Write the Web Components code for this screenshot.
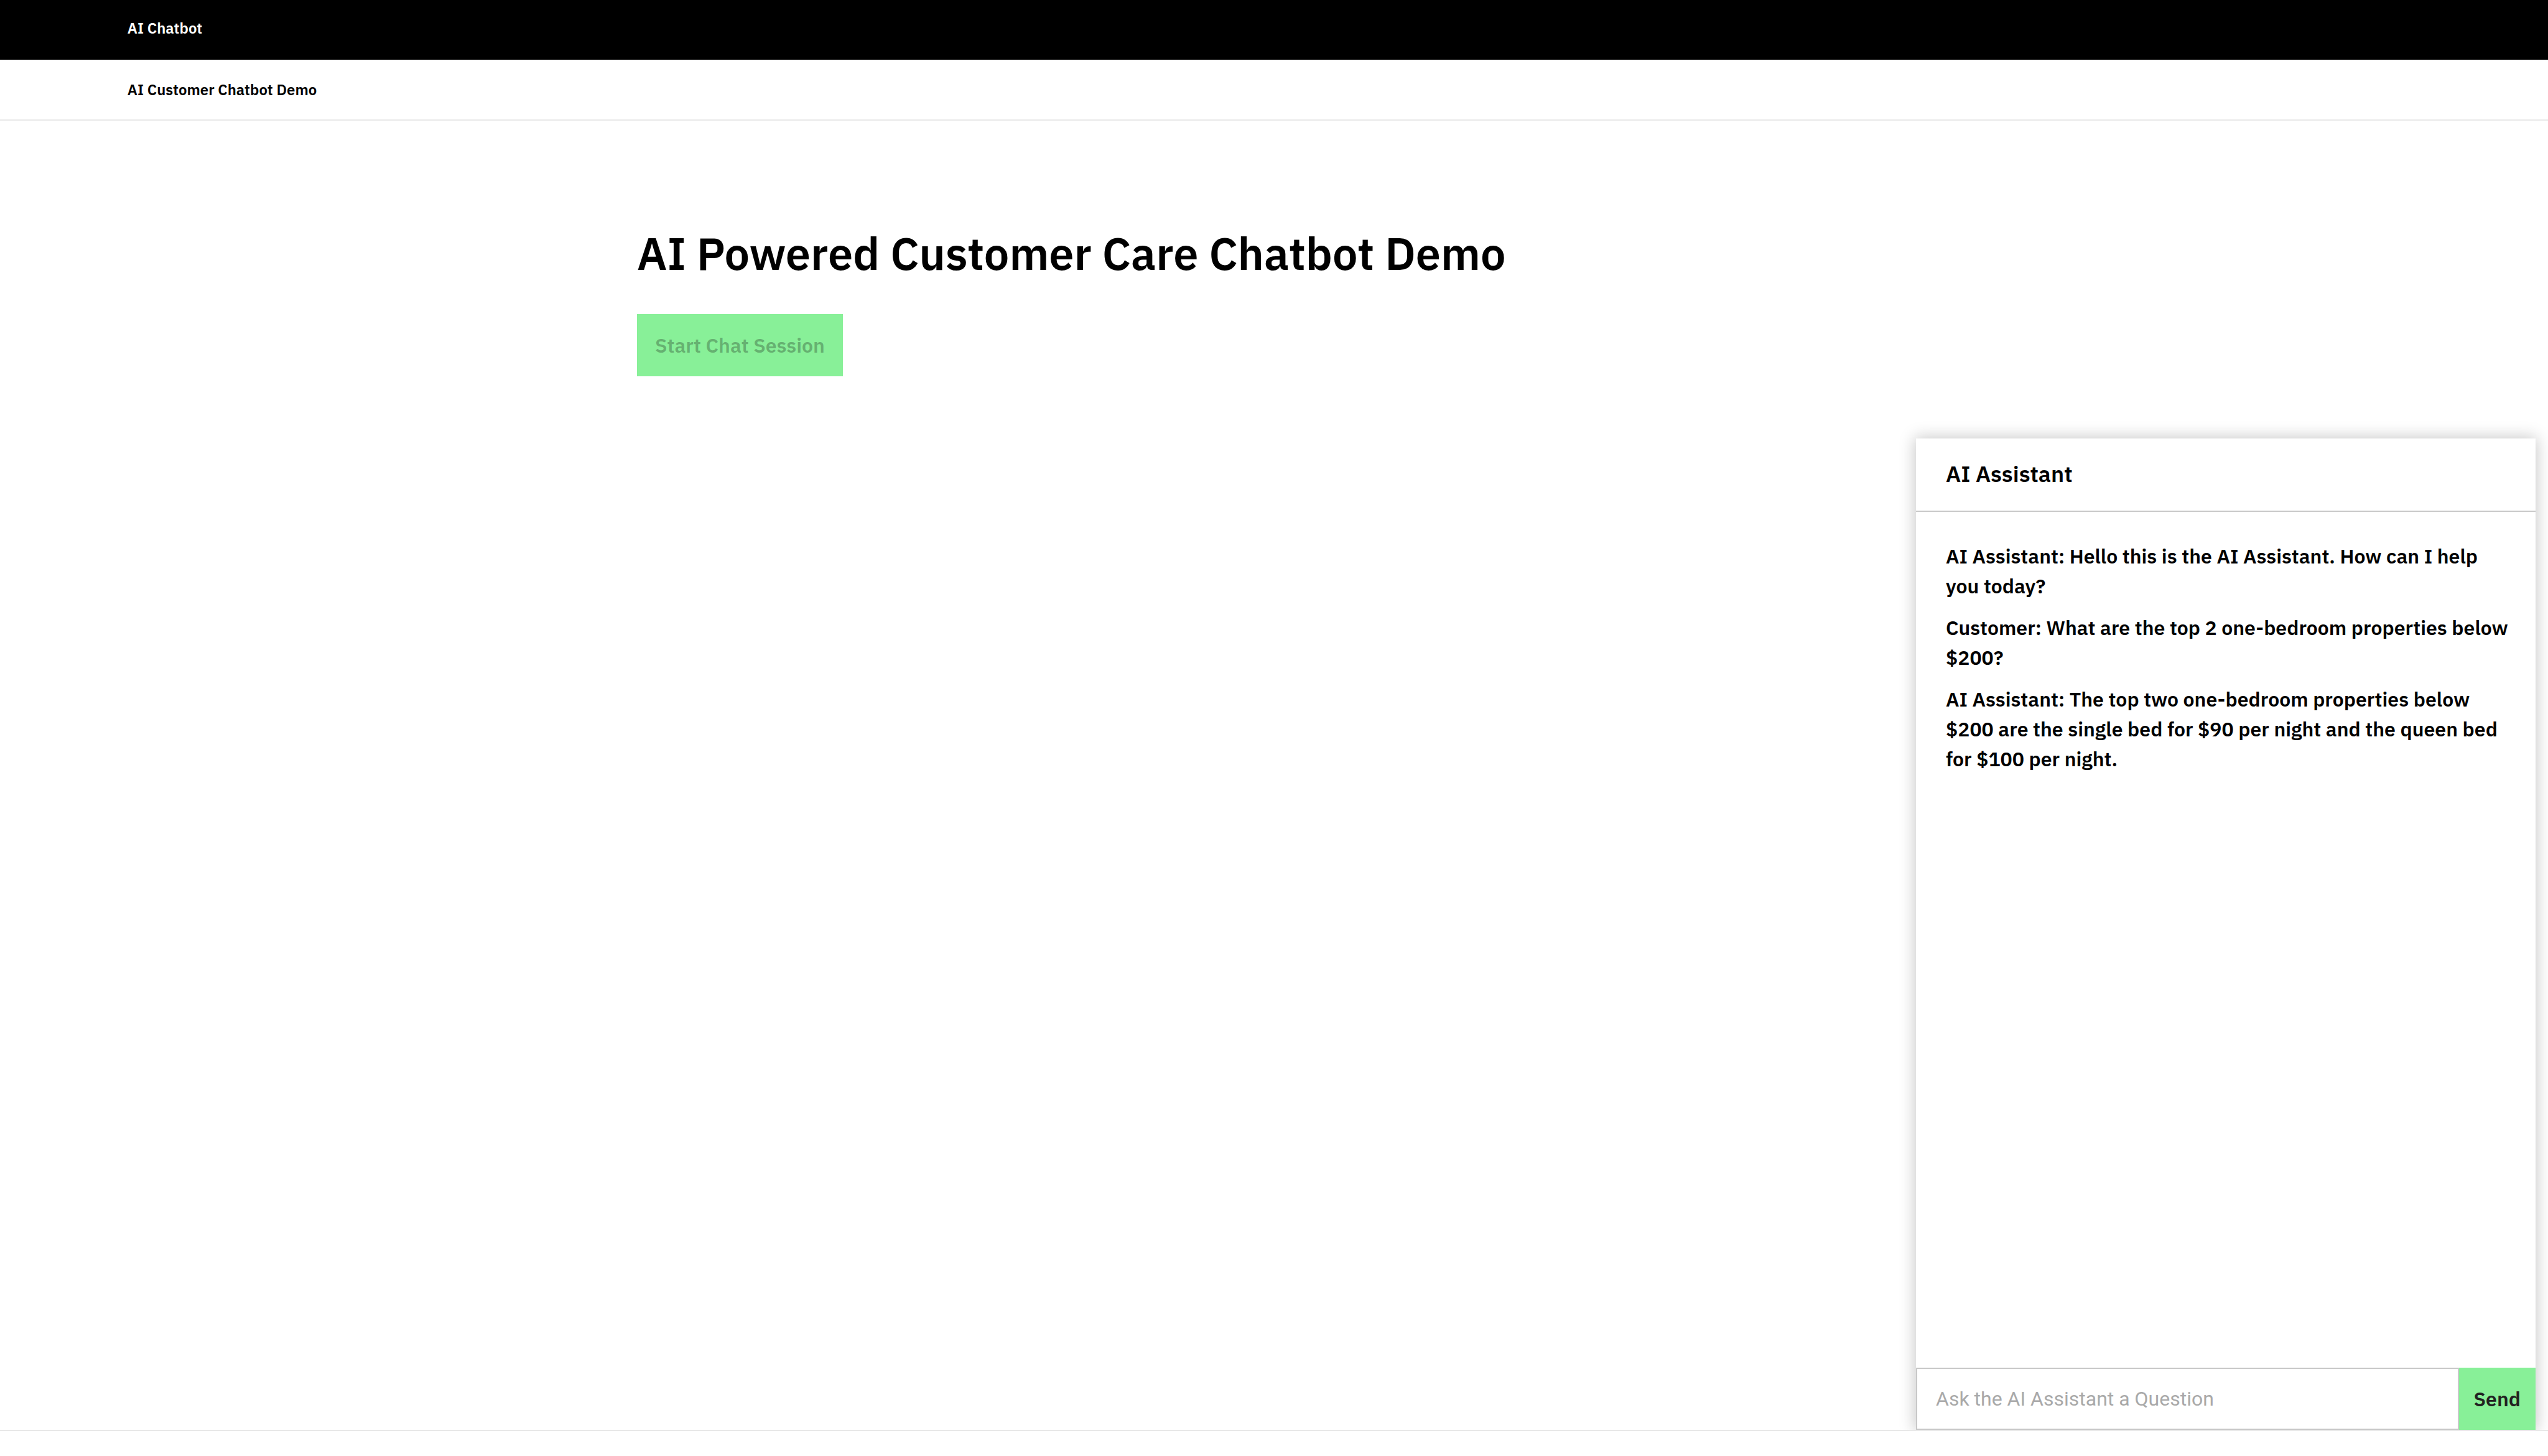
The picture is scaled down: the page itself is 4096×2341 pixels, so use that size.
<!DOCTYPE html>
<html lang="en">
<head>
<meta charset="utf-8">
<title>AI Customer Chatbot Demo</title>
<style>
  :root {
    --accent: #88f098;
    --line: #c8c8c8;
    --line-soft: #e8e8e8;
    --control-height: 100px;
  }
  body {
    margin: 0;
    background: #fff;
    color: #000;
    font: 600 32px/48px "IBM Plex Sans", "Open Sans", sans-serif;
  }
</style>
</head>
<body>
<demo-app></demo-app>

<script>
const attach = (host, html) => {
  host.attachShadow({ mode: 'open' }).innerHTML = html;
};

class NavBar extends HTMLElement {
  constructor() {
    super();
    attach(this, `
      <style>
        :host { display: block; padding: 30px 5%; font-size: 24px; line-height: 36px; }
        :host([tone="dark"]) { background: #000; color: #fff; padding-block: 27px 33px; }
        :host([tone="light"]) { border-bottom: 2px solid var(--line-soft); }
        a { color: inherit; text-decoration: none; }
      </style>
      <a href="#"><slot></slot></a>`);
  }
}

class ActionButton extends HTMLElement {
  constructor() {
    super();
    attach(this, `
      <style>
        :host { display: inline-flex; }
        button {
          height: var(--control-height);
          padding: 0 var(--button-pad, 29px);
          border: 0;
          border-radius: 0;
          background: var(--accent);
          color: #222;
          font: inherit;
          white-space: nowrap;
        }
        button:disabled { color: rgba(16, 16, 16, .3); }
      </style>
      <button type="button"><slot></slot></button>`);
    this.shadowRoot.querySelector('button').disabled = this.hasAttribute('disabled');
  }
}

class ChatMessage extends HTMLElement {
  constructor() {
    super();
    attach(this, `
      <style>
        :host { display: block; }
        p { margin: 0; }
      </style>
      <p><slot></slot></p>`);
  }
}

class ChatPanel extends HTMLElement {
  constructor() {
    super();
    attach(this, `
      <style>
        :host {
          display: flex;
          flex-direction: column;
          background: #fff;
          box-shadow: 0 0 24px 2px rgba(0, 0, 0, .22);
        }
        header { padding: 30px 48px 32px; border-bottom: 2px solid var(--line); }
        h2 { margin: 0; font: inherit; font-size: 36px; line-height: 54px; }
        .log { flex: 1; display: flex; flex-direction: column; gap: 19px; padding: 47px 44px 47px 48px; }
        form { display: flex; --button-pad: 24px; }
        input {
          flex: 1;
          min-width: 0;
          height: var(--control-height);
          box-sizing: border-box;
          padding: 0 30px;
          border: 2px solid var(--line);
          border-radius: 0;
          background: #fff;
          font: 400 32px/48px Roboto, Inter, sans-serif;
        }
        input::placeholder { color: #a9a9a9; opacity: 1; }
      </style>
      <header><h2><slot name="title"></slot></h2></header>
      <div class="log"><slot></slot></div>
      <form>
        <input type="text" aria-label="Question" placeholder="Ask the AI Assistant a Question">
        <action-button>Send</action-button>
      </form>`);
  }
}

class DemoApp extends HTMLElement {
  constructor() {
    super();
    attach(this, `
      <style>
        :host { display: flex; flex-direction: column; min-height: 100vh; }
        main {
          flex: 1;
          display: flex;
          overflow: clip;
          border-bottom: 2px solid var(--line-soft);
          margin-bottom: 40px;
        }
        .intro { flex: 1; padding: 166px 0 0 25vw; }
        h1 { margin: 0 0 51px; font: inherit; font-size: 72px; line-height: 94px; }
        chat-panel { width: 996px; height: 1594px; margin-right: 20px; align-self: flex-end; }
      </style>
      <nav-bar tone="dark">AI Chatbot</nav-bar>
      <nav-bar tone="light">AI Customer Chatbot Demo</nav-bar>
      <main>
        <section class="intro">
          <h1>AI Powered Customer Care Chatbot Demo</h1>
          <action-button disabled>Start Chat Session</action-button>
        </section>
        <chat-panel>
          <span slot="title">AI Assistant</span>
          <chat-message>AI Assistant: Hello this is the AI Assistant. How can I help you today?</chat-message>
          <chat-message>Customer: What are the top 2 one-bedroom properties below $200?</chat-message>
          <chat-message>AI Assistant: The top two one-bedroom properties below $200 are the single bed for $90 per night and the queen bed for $100 per night.</chat-message>
        </chat-panel>
      </main>`);
  }
}

customElements.define('nav-bar', NavBar);
customElements.define('action-button', ActionButton);
customElements.define('chat-message', ChatMessage);
customElements.define('chat-panel', ChatPanel);
customElements.define('demo-app', DemoApp);
</script>
</body>
</html>
